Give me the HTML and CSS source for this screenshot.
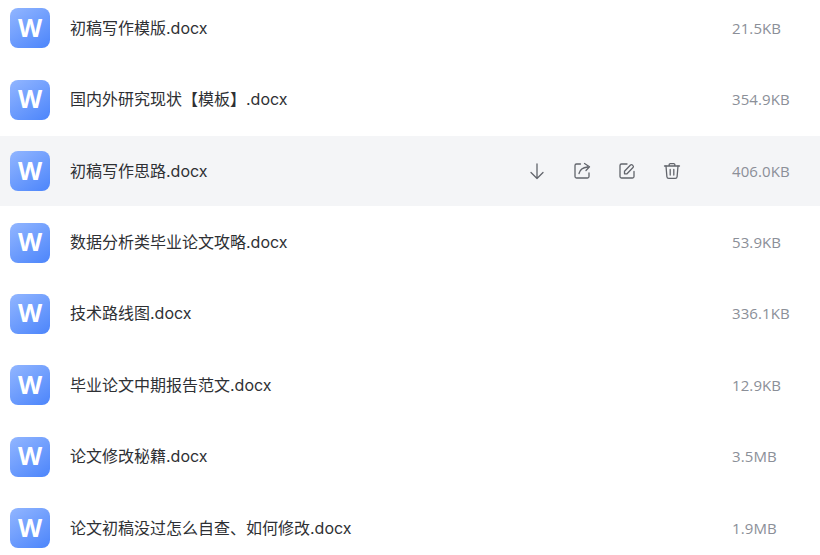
FILE: index.html
```html
<!DOCTYPE html>
<html lang="zh-CN">

<head>
    <meta charset="UTF-8" />
    <meta name="viewport" content="width=device-width, initial-scale=1.0" />
    <link rel="stylesheet" href="styles.css">
    <title>文件列表</title>
</head>

<body>
    <ul class="file-list">
        <li class="file-row">
            <span class="file-icon">W</span>
            <span class="file-name">初稿写作模版.docx</span>
            <span class="file-size">21.5KB</span>
        </li>
        <li class="file-row">
            <span class="file-icon">W</span>
            <span class="file-name">国内外研究现状【模板】.docx</span>
            <span class="file-size">354.9KB</span>
        </li>
        <li class="file-row active">
            <span class="file-icon">W</span>
            <span class="file-name">初稿写作思路.docx</span>
            <div class="file-actions">
                <!-- download -->
                <svg class="action" viewBox="0 0 18 18">
                    <path d="M9 2v14.500M3 10.500 9 16.500l6-6" />
                </svg>
                <!-- share -->
                <svg class="action" viewBox="0 0 18 18">
                    <path d="M7.500 2H3.500A1.500 1.500 0 0 0 2 3.500v11A1.500 1.500 0 0 0 3.500 16h11a1.500 1.500 0 0 0 1.500-1.500V11" />
                    <path d="M6 11.500C6.800 8 9.500 5.500 14.500 5M11.500 1.500 16.500 4.800 13 8.500" />
                </svg>
                <!-- edit -->
                <svg class="action" viewBox="0 0 18 18">
                    <path d="M9 2H3.500A1.500 1.500 0 0 0 2 3.500v11A1.500 1.500 0 0 0 3.500 16h11a1.500 1.500 0 0 0 1.500-1.500V9.500" />
                    <path d="M6.500 11.800V9.300l6-6.300a1.300 1.300 0 0 1 1.900 0l.6.600a1.300 1.300 0 0 1 0 1.900l-6 6.300z" />
                </svg>
                <!-- delete -->
                <svg class="action" viewBox="0 0 18 18">
                    <path d="M1.500 4h15M6.200 4V2.600A1 1 0 0 1 7.200 1.600h3.600a1 1 0 0 1 1 1V4" />
                    <path d="M3 4l.9 10.700a1.800 1.800 0 0 0 1.800 1.600h6.600a1.800 1.800 0 0 0 1.800-1.600L15 4" />
                    <path d="M7.200 7.500v5.500M10.800 7.500v5.500" />
                </svg>
            </div>
            <span class="file-size">406.0KB</span>
        </li>
        <li class="file-row">
            <span class="file-icon">W</span>
            <span class="file-name">数据分析类毕业论文攻略.docx</span>
            <span class="file-size">53.9KB</span>
        </li>
        <li class="file-row">
            <span class="file-icon">W</span>
            <span class="file-name">技术路线图.docx</span>
            <span class="file-size">336.1KB</span>
        </li>
        <li class="file-row">
            <span class="file-icon">W</span>
            <span class="file-name">毕业论文中期报告范文.docx</span>
            <span class="file-size">12.9KB</span>
        </li>
        <li class="file-row">
            <span class="file-icon">W</span>
            <span class="file-name">论文修改秘籍.docx</span>
            <span class="file-size">3.5MB</span>
        </li>
        <li class="file-row">
            <span class="file-icon">W</span>
            <span class="file-name">论文初稿没过怎么自查、如何修改.docx</span>
            <span class="file-size">1.9MB</span>
        </li>
    </ul>
</body>

</html>
```

FILE: styles.css
```css
* {
    box-sizing: border-box;
}

body {
    background-color: #fff;
    font-family: "Inter", "Noto Sans CJK SC", sans-serif;
    height: 100vh;
    overflow: hidden;
    margin: 0;
}

.file-list {
    list-style: none;
    margin: -6.8px 0 0;
    padding: 0;
}

.file-row {
    display: flex;
    align-items: center;
    height: 70.4px;
    margin-bottom: 1px;
    padding: 0 30px 0 10px;
}

.file-row.active {
    background-color: #f4f5f7;
}

.file-icon {
    display: flex;
    align-items: center;
    justify-content: center;
    flex: none;
    width: 40px;
    height: 40px;
    padding-bottom: 3px;
    border-radius: 8px;
    background: linear-gradient(145deg, #92b6ff, #4c85fb);
    color: #fff;
    font-family: "Open Sans", sans-serif;
    font-size: 25px;
    font-weight: 700;
}

.file-name {
    flex: 1;
    margin-left: 20px;
    color: #2e3034;
    font-size: 16px;
    line-height: 20px;
    padding-bottom: 1px;
}

.file-actions {
    display: flex;
    gap: 27px;
    margin-right: 51px;
}

.action {
    width: 18px;
    height: 18px;
    fill: none;
    stroke: #62656c;
    stroke-width: 1.3;
    stroke-linecap: round;
    stroke-linejoin: round;
}

.file-size {
    flex: none;
    width: 58px;
    padding-bottom: 1px;
    color: #8b8f98;
    font-family: "Open Sans", "Noto Sans CJK SC", sans-serif;
    font-size: 15px;
    letter-spacing: 0.1px;
}
```
